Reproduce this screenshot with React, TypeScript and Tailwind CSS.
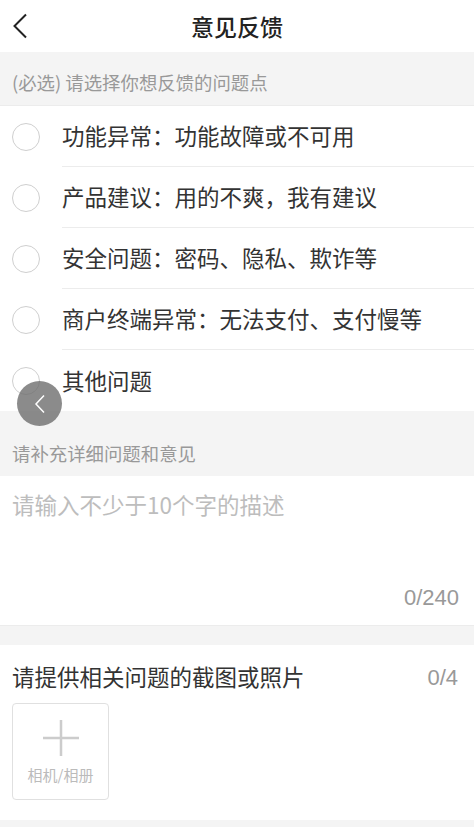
const options = [
  "功能异常：功能故障或不可用",
  "产品建议：用的不爽，我有建议",
  "安全问题：密码、隐私、欺诈等",
  "商户终端异常：无法支付、支付慢等",
  "其他问题",
];

const Radio = () => (
  <span className="block w-[28px] h-[28px] rounded-full border-[1.5px] border-[#cfcfcf] bg-white" />
);

export default function App() {
  return (
    <div
      className="relative min-h-screen bg-[#f4f4f4] text-[#333]"
      style={{ fontFamily: '"Noto Sans CJK SC", "Noto Sans", sans-serif' }}
    >
      {/* header */}
      <header className="flex items-center h-[52px] bg-white">
        <button className="w-[52px] h-full flex items-center pl-[12px]">
          <svg width="18" height="26" viewBox="0 0 18 26" fill="none">
            <path d="M14 1.5 L2.5 13 L14 24.5" stroke="#222" strokeWidth="2" />
          </svg>
        </button>
        <h1 className="flex-1 text-center text-[23px] font-medium text-[#222] leading-none">
          意见反馈
        </h1>
        <div className="w-[52px]" />
      </header>

      <div className="h-[54px] flex items-end px-3 pb-[8px] text-[18.4px] text-[#999] border-b border-[#ececec]">
        (必选) 请选择你想反馈的问题点
      </div>

      <ul className="bg-white">
        {options.map((o, i) => (
          <li key={o} className="flex h-[61px]">
            <div className="flex items-center pl-3 pr-[22px]">
              <Radio />
            </div>
            <div
              className={
                "flex-1 flex items-center text-[22.5px] text-[#333] " +
                (i < options.length - 1 ? "border-b border-[#ececec]" : "")
              }
            >
              {o}
            </div>
          </li>
        ))}
      </ul>

      <div className="h-[65px] flex items-end px-3 pb-[8px] text-[18.4px] text-[#999]">
        请补充详细问题和意见
      </div>

      <div className="bg-white h-[150px] flex flex-col justify-between px-3 pt-[12px] pb-[11px] border-b border-[#ececec]">
        <div className="text-[22.5px] leading-[32px] text-[#bdbdbd]">请输入不少于10个字的描述</div>
        <div
          className="text-right pr-[3px] text-[22px] leading-[32px] text-[#999]"
          style={{ fontFamily: '"Liberation Sans", "Noto Sans CJK SC", sans-serif' }}
        >
          0/240
        </div>
      </div>

      <div className="h-[19px]" />

      <section className="bg-white px-3 pt-[16px] pb-[20px]">
        <div className="flex justify-between items-center h-[32px] text-[22.5px]">
          <span className="text-[#333]">请提供相关问题的截图或照片</span>
          <span
            className="text-[#999] pr-[4px] text-[22px]"
            style={{ fontFamily: '"Liberation Sans", "Noto Sans CJK SC", sans-serif' }}
          >
            0/4
          </span>
        </div>
        <div className="mt-[10px] w-[97px] h-[97px] rounded-[4px] border border-[#e0e0e0] flex flex-col items-center pt-[16px]">
          <svg width="36" height="36" viewBox="0 0 36 36">
            <path d="M18 0 V36 M0 18 H36" stroke="#cccccc" strokeWidth="2.5" />
          </svg>
          <span className="mt-[11px] text-[15px] leading-none text-[#bbb]">相机/相册</span>
        </div>
      </section>

      {/* floating back button */}
      <button className="absolute left-[17px] top-[381px] w-[45px] h-[45px] rounded-full bg-[#6e6e6e]/80 flex items-center justify-center">
        <svg width="12" height="20" viewBox="0 0 12 20" fill="none">
          <path d="M10 1.5 L2 10 L10 18.5" stroke="#fff" strokeWidth="1.5" />
        </svg>
      </button>
    </div>
  );
}
